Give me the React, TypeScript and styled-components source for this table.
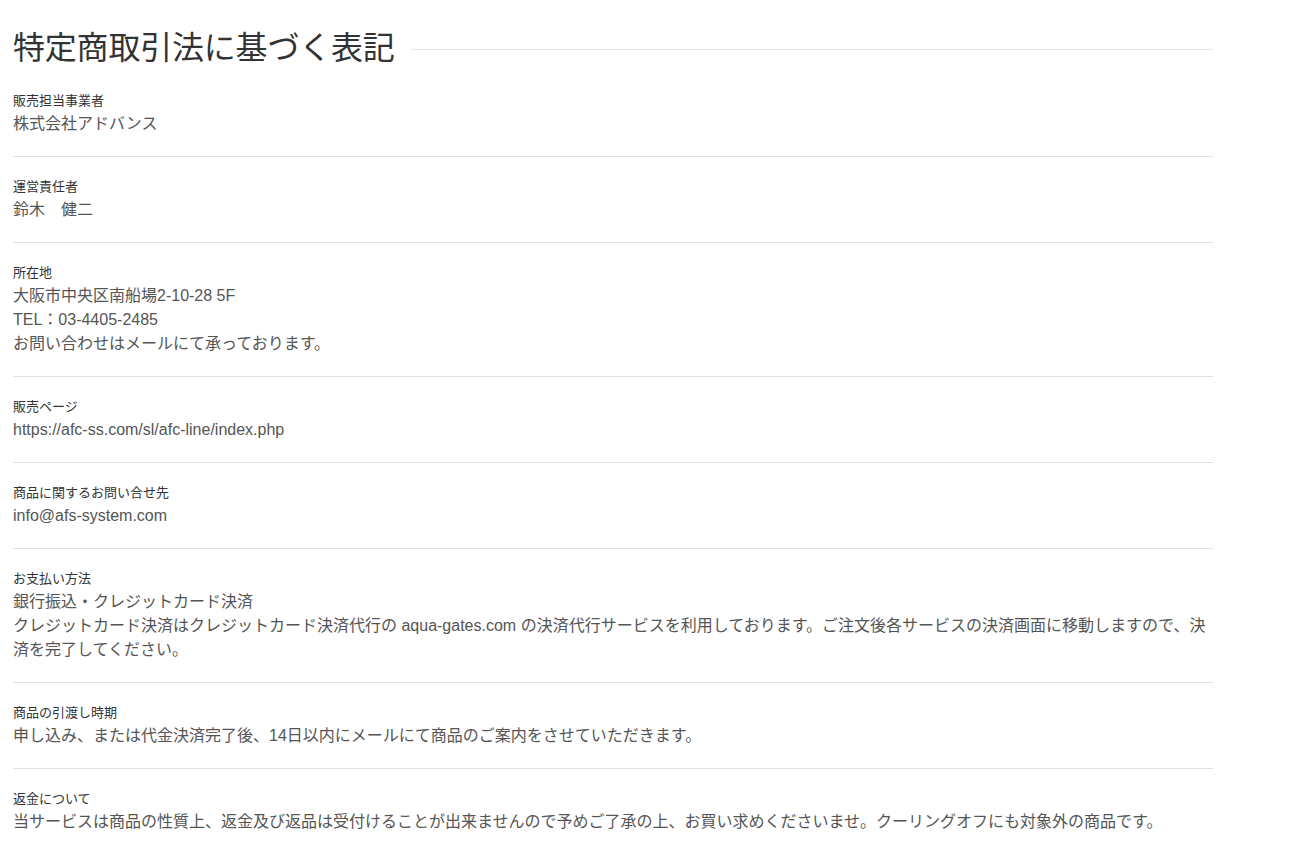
import React from "react";
import styled, { createGlobalStyle } from "styled-components";

const GlobalStyle = createGlobalStyle`
  body {
    margin: 0;
    background: #fff;
    font-family: "Liberation Sans", "Noto Sans CJK JP", sans-serif;
  }
`;

const Page = styled.div`
  width: 1200px;
  padding: 24px 13px 0;
`;

const TitleRow = styled.div`
  display: flex;
  align-items: center;
  gap: 16px;
  height: 47px;
`;

const Title = styled.h1`
  margin: 0;
  font-size: 32px;
  font-weight: 400;
  line-height: 1;
  color: #333;
  letter-spacing: -0.2px;
  white-space: nowrap;
`;

const TitleRule = styled.span`
  flex: 1;
  height: 1px;
  margin-top: 4px;
  background: #e3e3e3;
`;

const Item = styled.section<{ last?: boolean }>`
  padding: 20px 0;
  border-bottom: ${(p) => (p.last ? "none" : "1px solid #e0e0e0")};
`;

const Label = styled.div`
  font-size: 13px;
  line-height: 20px;
  margin-bottom: 1px;
  color: #333;
`;

const Value = styled.div`
  font-size: 16px;
  line-height: 24px;
  color: #555;
`;

interface Row {
  label: string;
  lines: string[];
}

const rows: Row[] = [
  { label: "販売担当事業者", lines: ["株式会社アドバンス"] },
  { label: "運営責任者", lines: ["鈴木　健二"] },
  {
    label: "所在地",
    lines: [
      "大阪市中央区南船場2-10-28 5F",
      "TEL：03-4405-2485",
      "お問い合わせはメールにて承っております。",
    ],
  },
  { label: "販売ページ", lines: ["https://afc-ss.com/sl/afc-line/index.php"] },
  { label: "商品に関するお問い合せ先", lines: ["info@afs-system.com"] },
  {
    label: "お支払い方法",
    lines: [
      "銀行振込・クレジットカード決済",
      "クレジットカード決済はクレジットカード決済代行の aqua-gates.com の決済代行サービスを利用しております。ご注文後各サービスの決済画面に移動しますので、決済を完了してください。",
    ],
  },
  {
    label: "商品の引渡し時期",
    lines: ["申し込み、または代金決済完了後、14日以内にメールにて商品のご案内をさせていただきます。"],
  },
  {
    label: "返金について",
    lines: [
      "当サービスは商品の性質上、返金及び返品は受付けることが出来ませんので予めご了承の上、お買い求めくださいませ。クーリングオフにも対象外の商品です。",
    ],
  },
];

const App: React.FC = () => {
  return (
    <>
      <GlobalStyle />
      <Page>
        <TitleRow>
          <Title>特定商取引法に基づく表記</Title>
          <TitleRule />
        </TitleRow>
        {rows.map((row, i) => (
          <Item key={row.label} last={i === rows.length - 1}>
            <Label>{row.label}</Label>
            <Value>
              {row.lines.map((line) => (
                <div key={line}>{line}</div>
              ))}
            </Value>
          </Item>
        ))}
      </Page>
    </>
  );
};

export default App;
